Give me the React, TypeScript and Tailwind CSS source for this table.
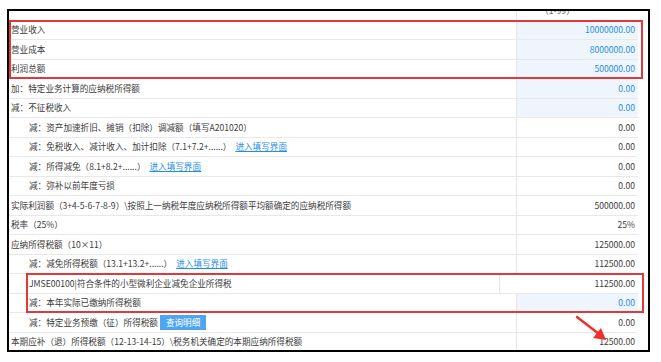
import React from "react";

type Row = {
  label: string;
  value: string;
  indent?: boolean;
  blue?: boolean;
  link?: boolean;
  button?: boolean;
  narrow?: boolean;
};

const rows: Row[] = [
  { label: "营业收入", value: "10000000.00", blue: true },
  { label: "营业成本", value: "8000000.00", blue: true },
  { label: "利润总额", value: "500000.00", blue: true },
  { label: "加：特定业务计算的应纳税所得额", value: "0.00", blue: true },
  { label: "减：不征税收入", value: "0.00", blue: true },
  { label: "减：资产加速折旧、摊销（扣除）调减额（填写A201020）", value: "0.00", indent: true },
  { label: "减：免税收入、减计收入、加计扣除（7.1+7.2+......）", value: "0.00", indent: true, link: true },
  { label: "减：所得减免（8.1+8.2+......）", value: "0.00", indent: true, link: true },
  { label: "减：弥补以前年度亏损", value: "0.00", indent: true },
  {
    label: "实际利润额（3+4-5-6-7-8-9）\\按照上一纳税年度应纳税所得额平均额确定的应纳税所得额",
    value: "500000.00",
  },
  { label: "税率（25%）", value: "25%" },
  { label: "应纳所得税额（10×11）", value: "125000.00" },
  { label: "减：减免所得税额（13.1+13.2+......）", value: "112500.00", indent: true, link: true },
  { label: "JMSE00100|符合条件的小型微利企业减免企业所得税", value: "112500.00", indent: true, narrow: true },
  { label: "减：本年实际已缴纳所得税额", value: "0.00", indent: true, blue: true },
  { label: "减：特定业务预缴（征）所得税额", value: "0.00", indent: true, button: true },
  { label: "本期应补（退）所得税额（12-13-14-15）\\税务机关确定的本期应纳所得税额", value: "12500.00" },
];

function TableRow({ row }: { row: Row }) {
  return (
    <div className="flex h-[19.5px] border-b border-[#e8e8e8]">
      <div
        className={`flex items-center whitespace-nowrap text-[#3c3c3c] ${
          row.indent ? "pl-[20px]" : "pl-[2px]"
        } ${row.narrow ? "w-[491px] border-r border-[#e3e8ee]" : "w-[507px]"}`}
      >
        <span>{row.label}</span>
        {row.link && (
          <span className="ml-[4px] text-[#1e8ee8] underline underline-offset-1">进入填写界面</span>
        )}
        {row.button && (
          <span className="ml-[2px] flex h-[15px] items-center bg-[#4ea5f0] px-[6px] text-white">
            查询明细
          </span>
        )}
      </div>
      <div
        className={`flex flex-1 items-center justify-end pr-[3px] ${
          row.narrow ? "" : "border-l border-[#e0e7ef]"
        } ${row.blue ? "bg-[#eef5fd] text-[#2a8fd8]" : "text-[#3c3c3c]"}`}
      >
        {row.value}
      </div>
    </div>
  );
}

export default function App() {
  return (
    <div
      className="w-[661px] h-[362px] bg-white pt-[9px] pl-[7px] text-[8.6px] leading-none"
      style={{ fontFamily: '"Noto Sans CJK SC", "Noto Sans", sans-serif' }}
    >
      <div className="relative w-[643px] h-[343px] border-2 border-black overflow-hidden">
        <div className="w-[629px]">
          {/* header row, only the lower part shows */}
          <div className="flex h-[9.5px] border-b border-[#e8e8e8] overflow-hidden">
            <div className="w-[507px]" />
            <div className="flex flex-1 items-start justify-center border-l border-[#e0e7ef] text-[#666]">
              <span className="mt-[-5px] pr-[40px]">（1-99）</span>
            </div>
          </div>
          {rows.map((row, i) => (
            <TableRow key={i} row={row} />
          ))}
        </div>

        {/* red highlight boxes */}
        <div className="absolute left-0 top-[9px] w-[634px] h-[59px] border-2 border-[#e2383a]" />
        <div className="absolute left-[17px] top-[262px] w-[618px] h-[40px] border-2 border-[#e2383a]" />

        {/* red arrow */}
        <svg className="absolute left-[566px] top-[304px]" width="34" height="28" viewBox="0 0 34 28">
          <path d="M2 2 L24 19" stroke="#f0302a" strokeWidth="2.4" strokeLinecap="round" />
          <path d="M31 25 L18 23 L26 13 Z" fill="#f0302a" />
        </svg>
      </div>
    </div>
  );
}
